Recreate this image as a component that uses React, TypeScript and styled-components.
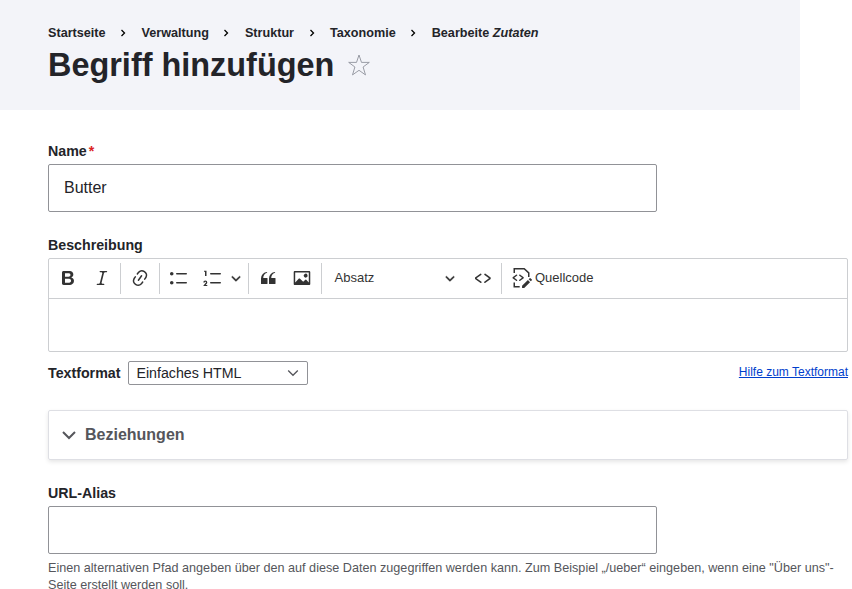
import React from "react";
import styled, { createGlobalStyle } from "styled-components";

const GlobalStyle = createGlobalStyle`
  *, *::before, *::after { box-sizing: border-box; }
  html, body { margin: 0; padding: 0; overflow: hidden; }
  body {
    background: #fff;
    color: #232429;
    font-family: "Liberation Sans", Arial, sans-serif;
    font-size: 16px;
  }
`;

const Page = styled.div`
  width: 852px;
`;

const Header = styled.header`
  width: 800px;
  height: 110px;
  padding: 24px 0 0 48px;
  background: #f3f4f9;
`;

const Breadcrumb = styled.nav`
  display: flex;
  align-items: center;
  height: 18px;
  font-size: 12.64px;
  font-weight: 700;
  line-height: 18px;
  white-space: nowrap;
`;

const Crumb = styled.span`
  display: flex;
  align-items: center;
`;

const CrumbArrow = styled.svg`
  width: 8px;
  height: 8px;
  margin: 0 14.5px 0 13.5px;
`;

const TitleRow = styled.div`
  display: flex;
  align-items: center;
  gap: 14px;
  height: 42px;
  margin-top: 2px;
`;

const Title = styled.h1`
  margin: 0;
  font-size: 32.44px;
  font-weight: 700;
  line-height: 42px;
`;

const Star = styled.svg`
  width: 22px;
  height: 22px;
`;

const Form = styled.main`
  display: flex;
  flex-direction: column;
  width: 848px;
  padding: 32px 0 0 48px;
`;

const Label = styled.label`
  height: 18px;
  font-size: 14.22px;
  font-weight: 700;
  line-height: 18px;
`;

const Required = styled.span`
  margin-left: 2px;
  color: #dc2323;
`;

const Input = styled.input`
  width: 609px;
  height: 48px;
  margin: 4px 0 0;
  padding: 0 15px;
  border: 1px solid #919297;
  border-radius: 2px;
  outline: 0;
  background: #fff;
  color: #232429;
  font: 16px "Liberation Sans", Arial, sans-serif;
`;

const Field = styled.div<{ $gap?: number }>`
  display: flex;
  flex-direction: column;
  margin-top: ${(p) => p.$gap ?? 0}px;
`;

const Editor = styled.div`
  height: 94px;
  margin-top: 4px;
  border: 1px solid #ccced1;
  border-radius: 2px;
`;

const Toolbar = styled.div`
  display: flex;
  align-items: center;
  height: 40px;
  padding-left: 2px;
  border-bottom: 1px solid #ccced1;
  color: #333;
  font-size: 13px;
`;

const ToolButton = styled.span<{ $width?: number }>`
  display: flex;
  align-items: center;
  justify-content: center;
  flex: none;
  width: ${(p) => p.$width ?? 34}px;
  height: 33px;
  padding-bottom: 2px;
`;

const Separator = styled.span<{ $before?: number; $after?: number }>`
  flex: none;
  width: 1px;
  height: 31px;
  margin: 0 ${(p) => p.$after ?? 2}px 0 ${(p) => p.$before ?? 1}px;
  background: #ccced1;
`;

const Glyph = styled.svg<{ $size: number }>`
  display: block;
  flex: none;
  width: ${(p) => p.$size}px;
  height: ${(p) => p.$size}px;
  fill: currentColor;
`;

const HeadingSelect = styled.span`
  display: flex;
  align-items: center;
  justify-content: space-between;
  width: 142px;
  height: 33px;
  padding: 0 12px 2px 9.5px;
`;

const SourceButton = styled.span`
  display: flex;
  align-items: center;
  gap: 3px;
  height: 33px;
  padding: 0 0 2px 8px;
`;

const FormatRow = styled.div`
  display: flex;
  align-items: center;
  height: 24px;
  margin-top: 9px;
`;

const FormatSelect = styled.div`
  display: flex;
  align-items: center;
  justify-content: space-between;
  width: 180px;
  height: 24px;
  margin-left: 7.5px;
  padding: 0 8px 0 7.5px;
  border: 1px solid #919297;
  border-radius: 2px;
  font-size: 14.22px;
  line-height: 22px;
`;

const Chevron = styled.svg<{ $w: number; $h: number }>`
  width: ${(p) => p.$w}px;
  height: ${(p) => p.$h}px;
  fill: none;
  stroke: #55565b;
`;

const HelpLink = styled.a`
  margin: -3px 0 0 auto;
  color: #003ecc;
  font-size: 12px;
  text-decoration: underline;
`;

const Details = styled.section`
  display: flex;
  align-items: center;
  gap: 9px;
  height: 50px;
  margin-top: 25px;
  padding-left: 13px;
  border: 1px solid #dedfe4;
  border-radius: 2px;
  box-shadow: 0 2px 4px rgba(0, 0, 0, 0.1);
  color: #55565b;
  font-weight: 700;
`;

const Description = styled.p`
  margin: 6px 0 0;
  color: #55565b;
  font-size: 12.64px;
  line-height: 17px;
`;

const ICONS = {
  bold: "M10.187 17H5.773c-.637 0-1.092-.138-1.364-.415-.273-.277-.409-.718-.409-1.323V4.738c0-.617.14-1.062.419-1.332.279-.27.73-.406 1.354-.406h4.68c.69 0 1.288.041 1.793.124.506.083.96.242 1.36.478.341.197.644.447.906.75a3.262 3.262 0 0 1 .808 2.162c0 1.401-.722 2.426-2.167 3.075C15.05 10.175 16 11.315 16 13.01a3.756 3.756 0 0 1-2.296 3.504 6.1 6.1 0 0 1-1.517.377c-.571.073-1.238.11-2 .11zm-.217-6.217H7v4.087h3.069c1.977 0 2.965-.69 2.965-2.072 0-.707-.256-1.22-.768-1.537-.512-.319-1.277-.478-2.296-.478zM7 5.13v3.619h2.606c.729 0 1.292-.067 1.69-.2a1.6 1.6 0 0 0 .91-.765c.165-.267.247-.566.247-.897 0-.707-.26-1.176-.778-1.409-.519-.232-1.31-.348-2.375-.348H7z",
  italic: "m9.586 14.633.021.004c-.036.335.095.655.393.962.082.083.173.15.274.201h1.474a.6.6 0 1 1 0 1.2H5.304a.6.6 0 0 1 0-1.2h1.15c.474-.07.809-.182 1.005-.334.157-.122.291-.32.404-.597l2.416-9.55a1.053 1.053 0 0 0-.281-.823 1.12 1.12 0 0 0-.442-.296H8.15a.6.6 0 0 1 0-1.2h6.443a.6.6 0 1 1 0 1.2h-1.195c-.376.056-.65.155-.823.296-.215.175-.423.439-.623.79l-2.366 9.347z",
  link: "m11.077 15 .991-1.416a.75.75 0 1 1 1.229.86l-1.148 1.64a.748.748 0 0 1-.217.206 5.251 5.251 0 0 1-8.503-5.955.741.741 0 0 1 .12-.274l1.147-1.639a.75.75 0 1 1 1.228.86L4.933 10.7l.006.003a3.75 3.75 0 0 0 6.132 4.294l.006.004zm5.494-5.335a.748.748 0 0 1-.12.274l-1.147 1.639a.75.75 0 1 1-1.228-.86l.86-1.23a3.75 3.75 0 0 0-6.144-4.301l-.86 1.229a.75.75 0 0 1-1.229-.86l1.148-1.64a.748.748 0 0 1 .217-.206 5.251 5.251 0 0 1 8.503 5.955zm-4.563-2.532a.75.75 0 0 1 .184 1.045l-3.155 4.505a.75.75 0 1 1-1.229-.86l3.155-4.506a.75.75 0 0 1 1.045-.184z",
  bullets: "M7 5.75c0 .414.336.75.75.75h9.5a.75.75 0 1 0 0-1.5h-9.5a.75.75 0 0 0-.75.75zm-6 0C1 4.784 1.777 4 2.75 4c.966 0 1.75.777 1.75 1.75 0 .966-.777 1.75-1.75 1.75C1.784 7.5 1 6.723 1 5.75zm6 9c0 .414.336.75.75.75h9.5a.75.75 0 1 0 0-1.5h-9.5a.75.75 0 0 0-.75.75zm-6 0c0-.966.777-1.75 1.75-1.75.966 0 1.75.777 1.75 1.75 0 .966-.777 1.75-1.75 1.75-.966 0-1.75-.777-1.75-1.75z",
  numbers: "M7 5.75c0 .414.336.75.75.75h9.5a.75.75 0 1 0 0-1.5h-9.5a.75.75 0 0 0-.75.75zM3.5 3v5H2V3.7H1v-1h2.5V3zM.343 17.857l2.59-3.257H2.92a.6.6 0 1 0-1.04 0H.302a2 2 0 1 1 3.995 0h-.001c-.048.405-.16.734-.333.988-.175.254-.59.692-1.244 1.312H4.3v1h-4l.043-.043zM7 14.75a.75.75 0 0 1 .75-.75h9.5a.75.75 0 1 1 0 1.5h-9.5a.75.75 0 0 1-.75-.75z",
  quote: "M3 10.423a6.5 6.5 0 0 1 6.056-6.408l.038.67C6.448 5.423 5.354 7.663 5.22 10H9c.552 0 .5.432.5.986v4.511c0 .554-.448.503-1 .503h-5c-.552 0-.5-.449-.5-1.003v-4.574zm8 0a6.5 6.5 0 0 1 6.056-6.408l.038.67c-2.646.739-3.74 2.979-3.873 5.315H17c.552 0 .5.432.5.986v4.511c0 .554-.448.503-1 .503h-5c-.552 0-.5-.449-.5-1.003v-4.574z",
  image: "M6.91 10.54c.26-.23.64-.21.88.03l3.36 3.14 2.23-2.06a.64.64 0 0 1 .87 0l2.52 2.97V4.5H3.2v10.12l3.71-4.08zm10.27-7.51c.6 0 1.09.47 1.09 1.05v11.84c0 .59-.49 1.06-1.09 1.06H2.79c-.6 0-1.09-.47-1.09-1.06V4.08c0-.58.49-1.05 1.1-1.05h14.38zm-5.22 5.56a1.96 1.96 0 1 1 3.4-1.96 1.96 1.96 0 0 1-3.4 1.96z",
  code: "m12.5 5.7 5.2 3.9v1.3l-5.6 4c-.1.2-.3.2-.5.2-.3-.1-.6-.7-.6-1l.3-.4 4.7-3.5L11.5 7l-.2-.2c-.1-.3-.1-.6 0-.8.2-.2.5-.4.8-.4a.8.8 0 0 1 .4.1zm-5.2 0L2 9.6v1.3l5.6 4c.1.2.3.2.5.2.3-.1.7-.7.6-1 0-.1 0-.3-.2-.4l-5-3.5L8.2 7l.2-.2c.1-.3.1-.6 0-.8-.2-.2-.5-.4-.8-.4a.8.8 0 0 0-.3.1z",
  brackets: "M4.06 6.64a.75.75 0 0 1 .958 1.15l-.085.07L2.29 9.75l2.646 1.89c.302.216.4.62.232.951l-.058.095a.75.75 0 0 1-.951.232l-.095-.058-3.5-2.5V9.14l3.496-2.5zm4.194 6.22a.75.75 0 0 1-.958-1.149l.085-.07 2.643-1.89-2.646-1.89a.75.75 0 0 1-.232-.952l.058-.095a.75.75 0 0 1 .95-.232l.096.058 3.5 2.5v1.22l-3.496 2.5zm7.644-.836 2.122 2.122-5.825 5.809-2.125-.005.003-2.116zm2.539-1.847 1.414 1.414a.5.5 0 0 1 0 .707l-1.06 1.06-2.125-2.12 1.064-1.061a.5.5 0 0 1 .707 0z",
  arrow: "M.941 4.523a.75.75 0 1 1 1.06-1.06l3.006 3.005 3.005-3.005a.75.75 0 1 1 1.06 1.06l-3.549 3.55a.75.75 0 0 1-1.168-.136L.941 4.523z",
};

const Icon = ({ name }: { name: keyof typeof ICONS }) => (
  <Glyph $size={20} viewBox="0 0 20 20">
    <path d={ICONS[name]} fillRule={name === "image" ? "evenodd" : undefined} />
  </Glyph>
);

const DropArrow = () => (
  <Glyph $size={10} viewBox="0 0 10 10">
    <path d={ICONS.arrow} stroke="currentColor" strokeWidth="0.3" />
  </Glyph>
);

const CRUMBS = ["Startseite", "Verwaltung", "Struktur", "Taxonomie"];

export default function App() {
  return (
    <Page>
      <GlobalStyle />
      <Header>
        <Breadcrumb>
          {CRUMBS.map((c) => (
            <Crumb key={c}>
              {c}
              <CrumbArrow viewBox="0 0 8 8">
                <path d="M2.5 1 5.5 4l-3 3" fill="none" stroke="#000" strokeWidth="1.3" />
              </CrumbArrow>
            </Crumb>
          ))}
          <span>
            Bearbeite <em>Zutaten</em>
          </span>
        </Breadcrumb>
        <TitleRow>
          <Title>Begriff hinzufügen</Title>
          <Star viewBox="0 0 22 22">
            <path
              d="M11 1 13.5 8.4H21.3L15.1 13 17.5 20.9 11 16.3 4.5 20.9 6.9 13 .7 8.4H8.5Z"
              fill="none"
              stroke="#8e929c"
              strokeWidth="0.9"
            />
          </Star>
        </TitleRow>
      </Header>

      <Form>
        <Field>
          <Label htmlFor="name">
            Name<Required>*</Required>
          </Label>
          <Input id="name" defaultValue="Butter" />
        </Field>

        <Field $gap={24}>
          <Label>Beschreibung</Label>
          <Editor>
            <Toolbar>
              <ToolButton><Icon name="bold" /></ToolButton>
              <ToolButton><Icon name="italic" /></ToolButton>
              <Separator />
              <ToolButton><Icon name="link" /></ToolButton>
              <Separator $before={2} />
              <ToolButton><Icon name="bullets" /></ToolButton>
              <ToolButton><Icon name="numbers" /></ToolButton>
              <ToolButton $width={11}><DropArrow /></ToolButton>
              <Separator $before={7} />
              <ToolButton><Icon name="quote" /></ToolButton>
              <ToolButton><Icon name="image" /></ToolButton>
              <Separator $before={2} $after={3} />
              <HeadingSelect>
                Absatz
                <DropArrow />
              </HeadingSelect>
              <ToolButton $width={31}><Icon name="code" /></ToolButton>
              <Separator $before={3} />
              <SourceButton>
                <Glyph $size={20} viewBox="0 0 20 20">
                  <path
                    d="M2.25 5V.75H12.2L16.75 4.9V9M2.25 14.5v4.25H7.7"
                    fill="none"
                    stroke="currentColor"
                    strokeWidth="1.5"
                  />
                  <path d={ICONS.brackets} />
                </Glyph>
                Quellcode
              </SourceButton>
            </Toolbar>
          </Editor>
          <FormatRow>
            <Label>Textformat</Label>
            <FormatSelect>
              Einfaches HTML
              <Chevron $w={12} $h={8} viewBox="0 0 12 8" strokeWidth="1.3">
                <path d="m1.2 1.5 4.8 4.8 4.8-4.8" />
              </Chevron>
            </FormatSelect>
            <HelpLink>Hilfe zum Textformat</HelpLink>
          </FormatRow>
        </Field>

        <Details>
          <Chevron $w={14} $h={9} viewBox="0 0 14 9" strokeWidth="2">
            <path d="m1 1 6 6 6-6" />
          </Chevron>
          Beziehungen
        </Details>

        <Field $gap={24}>
          <Label htmlFor="alias">URL-Alias</Label>
          <Input id="alias" />
          <Description>
            Einen alternativen Pfad angeben über den auf diese Daten zugegriffen werden kann. Zum
            Beispiel „/ueber“ eingeben, wenn eine "Über uns"-Seite erstellt werden soll.
          </Description>
        </Field>
      </Form>
    </Page>
  );
}
